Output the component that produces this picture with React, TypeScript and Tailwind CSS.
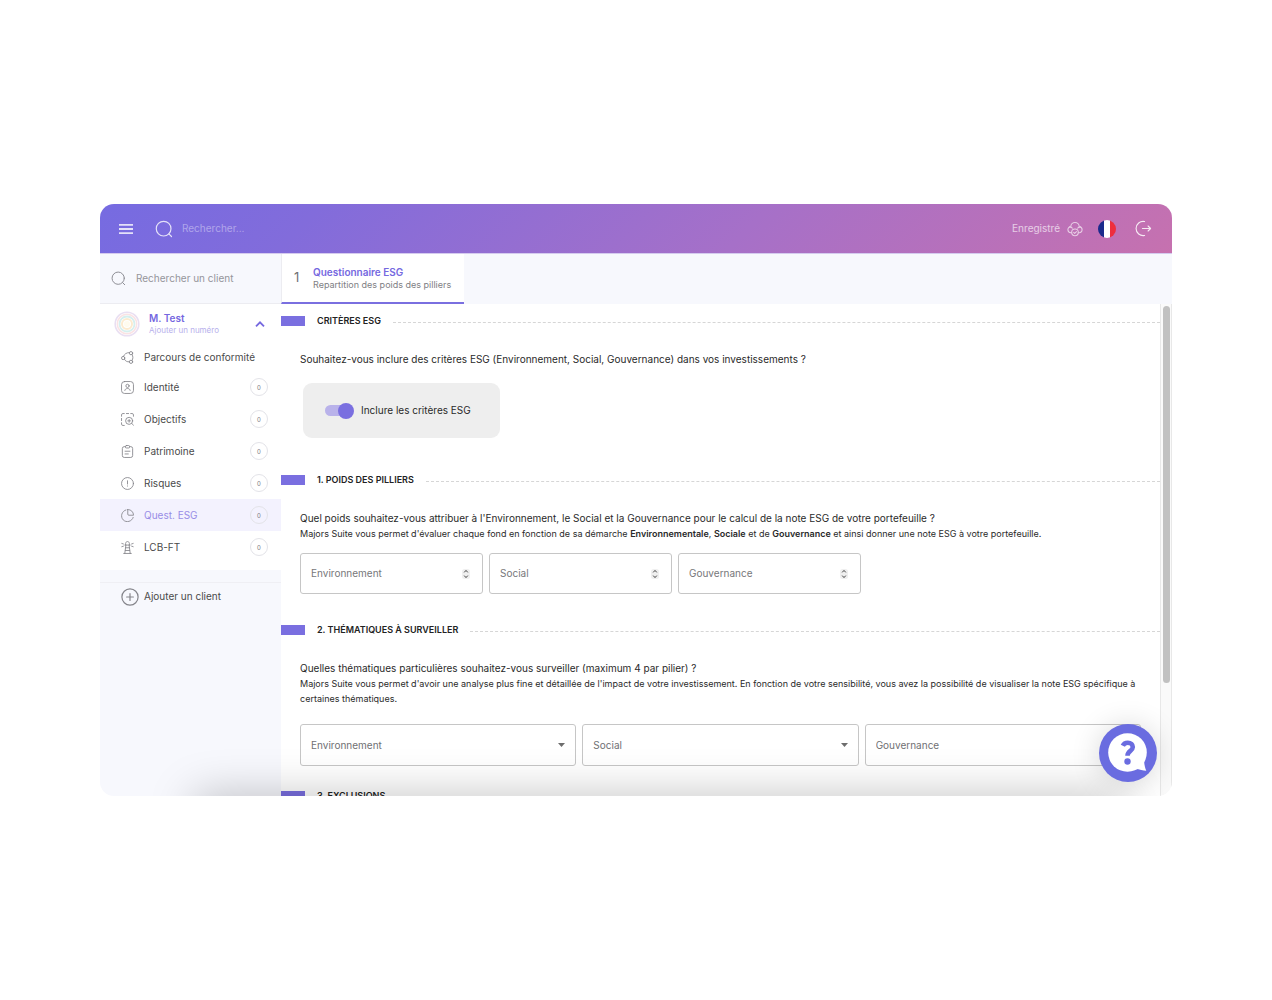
import React from "react";

interface IconProps {
  className?: string;
  children?: React.ReactNode;
}

function Icon({ className, children }: IconProps) {
  return (
    <svg
      className={className}
      viewBox="0 0 24 24"
      fill="none"
      stroke="currentColor"
      strokeWidth={1.6}
      strokeLinecap="round"
      strokeLinejoin="round"
      aria-hidden="true"
    >
      {children}
    </svg>
  );
}

const searchIcon = (
  <>
    <circle cx="11.5" cy="11.5" r="9.8" />
    <path d="M18.5 18.5 22 22" />
  </>
);

const menu = [
  {
    label: "Identité",
    count: 0,
    icon: (
      <>
        <rect x="1" y="1" width="22" height="22" rx="5.5" />
        <circle cx="12" cy="9" r="3" />
        <path d="M7 17.5c.4-2.4 2.500-3.700 5-3.700s4.600 1.300 5 3.700" />
      </>
    ),
  },
  {
    label: "Objectifs",
    count: 0,
    icon: (
      <>
        <path d="M1 6V3.500A2.500 2.500 0 0 1 3.500 1H6M10 1h4M18 1h2.500A2.500 2.500 0 0 1 23 3.500V6M1 10v4M1 18v2.500A2.500 2.500 0 0 0 3.500 23H6" />
        <circle cx="15" cy="14.500" r="6.500" />
        <path d="m20 19.500 3 3M15 12v5M12.500 14.500h5" />
      </>
    ),
  },
  {
    label: "Patrimoine",
    count: 0,
    icon: (
      <>
        <path d="M8 3H6A3.500 3.500 0 0 0 2.500 6.500v13A3.500 3.500 0 0 0 6 23h12a3.500 3.500 0 0 0 3.500-3.500v-13A3.500 3.500 0 0 0 18 3h-2" />
        <rect x="8" y="1" width="8" height="4.500" rx="2" />
        <path d="M7.500 11.500h9M7.500 16.500h6" />
      </>
    ),
  },
  {
    label: "Risques",
    count: 0,
    icon: (
      <>
        <circle cx="12" cy="12" r="11" />
        <path d="M12 7v6M12 16.500v.3" />
      </>
    ),
  },
  {
    label: "Quest. ESG",
    count: 0,
    active: true,
    icon: (
      <>
        <path d="M9 1.800A11 11 0 1 0 22.500 15.500" />
        <path d="M12.500 1v8.500a2 2 0 0 0 2 2H23C23 5.500 18.500 1 12.500 1Z" />
      </>
    ),
  },
  {
    label: "LCB-FT",
    count: 0,
    icon: (
      <>
        <path d="M8.500 7.500V4.500C8.500 2.800 10 1 12 1s3.500 1.800 3.500 3.500v3M7 7.500h10M9 7.500 7 23M15 7.500 17 23M5 23h14M8.500 12.500h7M8 17.500h8" />
        <path d="M1.500 4.500 4.500 5.500M1.500 10.500l3-1M22.500 4.500 19.500 5.500M22.500 10.500l-3-1" />
      </>
    ),
  },
];

function TopBar() {
  return (
    <header className="flex h-[50px] shrink-0 items-center border-b border-[#d5cbef] bg-[linear-gradient(135deg,#766be1_0%,#826cdb_20%,#a670c8_60%,#c671af_100%)] pr-5 pl-[18px] text-white">
      <button type="button" aria-label="Menu" className="flex size-4 items-center justify-center opacity-80">
        <svg className="w-[14px]" viewBox="0 0 14 10" fill="currentColor" aria-hidden="true">
          <path d="M0 0h14v1.800H0zM0 4.100h14v1.800H0zM0 8.200h14V10H0z" />
        </svg>
      </button>
      <label className="ml-[21px] flex flex-1 items-center">
        <Icon className="size-[18px] opacity-80">{searchIcon}</Icon>
        <input
          type="search"
          aria-label="Rechercher"
          placeholder="Rechercher..."
          className="ml-[9px] w-48 bg-transparent text-[10px] outline-none placeholder:text-white/40"
        />
      </label>
      <span className="text-[10px] text-white/65">Enregistré</span>
      <Icon className="ml-[7px] size-4 opacity-65">
        <path d="M7 17.500H6a4.500 4.500 0 0 1-.3-9 6.300 6.300 0 0 1 12.600 0A4.500 4.500 0 0 1 18 17.500h-1" />
        <path d="M3.500 8.800c2 0 3.500.8 4.500 2M20.500 8.800c-2 0-3.500.8-4.500 2" />
        <circle cx="12" cy="17" r="5" />
        <path d="m10 17 1.500 1.500 2.700-2.700" />
      </Icon>
      <button type="button" aria-label="Français" className="ml-[15px] flex size-[18px] overflow-hidden rounded-full">
        <span className="h-full flex-1 bg-[#1b2a8c]" />
        <span className="h-full flex-1 bg-white" />
        <span className="h-full flex-1 bg-[#ee2e3d]" />
      </button>
      <button type="button" aria-label="Déconnexion" className="ml-[19px] opacity-85">
        <Icon className="size-[17px]">
          <path d="M13.500 2.200A10 10 0 1 0 13.500 21.800M10.500 12H22M18.500 8.500 22 12l-3.500 3.500" />
        </Icon>
      </button>
    </header>
  );
}

function Sidebar() {
  return (
    <aside className="flex w-[181px] shrink-0 flex-col bg-[#f7f8fd] text-[#4a4a4a]">
      <label className="flex h-[50px] shrink-0 items-center border-b border-[#ececf1] pl-[11px]">
        <Icon className="size-[15px] shrink-0 text-[#8f8f96]">{searchIcon}</Icon>
        <input
          type="search"
          aria-label="Rechercher un client"
          placeholder="Rechercher un client"
          className="ml-[10px] w-full min-w-0 bg-transparent text-[10px] outline-none placeholder:text-[#95959b]"
        />
      </label>
      <div className="bg-white pb-[7px]">
        <div className="flex h-10 items-center pr-4 pl-[14px]">
          <svg className="size-[26px]" viewBox="0 0 26 26" fill="none" aria-hidden="true">
            <circle cx="13" cy="13" r="11.800" stroke="#e9dff2" strokeWidth="1.600" />
            <circle cx="13" cy="13" r="9.700" stroke="#fae3e4" strokeWidth="1.500" />
            <circle cx="13" cy="13" r="7.500" stroke="#d6efee" strokeWidth="1.800" />
            <circle cx="13" cy="13" r="5" stroke="#fcebd0" strokeWidth="2" />
            <circle cx="13" cy="13" r="3" fill="#fffbee" />
          </svg>
          <div className="ml-[9px] flex-1">
            <p className="text-[10px] leading-[13px] font-semibold text-[#7568df]">M. Test</p>
            <a href="#numero" className="block text-[8px] leading-[11px] text-[#b7b0ec]">
              Ajouter un numéro
            </a>
          </div>
          <button type="button" aria-label="Replier" className="text-[#7568df]">
            <svg className="w-[10px]" viewBox="0 0 10 6" fill="none" stroke="currentColor" strokeWidth="1.800" aria-hidden="true">
              <path d="m1 5.300 4-4 4 4" />
            </svg>
          </button>
        </div>
        <nav>
          <a href="#parcours" className="flex h-[27px] items-center pl-[21px] text-[10px]">
            <Icon className="mr-[10px] size-[13px] text-[#85858b]">
              <circle cx="4" cy="13" r="3" />
              <circle cx="18.500" cy="4" r="3" />
              <circle cx="18.500" cy="20" r="3" />
              <path d="M4.500 10c1.500-4 5.500-7.500 11-7M6.500 15.500c1.500 3 4.500 5 9 4.500M20.500 6.500c2 3.500 2 7.500 0 11" />
            </Icon>
            Parcours de conformité
          </a>
          {menu.map((item) => (
            <a
              key={item.label}
              href={"#" + item.label}
              className={
                item.active
                  ? "flex h-8 items-center bg-[#f3f2fe] pr-[13px] pl-[21px] text-[10px] text-[#988de6]"
                  : "flex h-8 items-center pr-[13px] pl-[21px] text-[10px]"
              }
            >
              <Icon className="mr-[10px] size-[13px] text-[#85858b]">{item.icon}</Icon>
              <span className="flex-1">{item.label}</span>
              <span className="flex size-[18px] items-center justify-center rounded-full border border-[#e3e3e8] text-[6px] text-[#77777c]">
                {item.count}
              </span>
            </a>
          ))}
        </nav>
      </div>
      <button
        type="button"
        className="mt-3 flex h-7 items-center border-t border-[#efeff4] pl-[21px] text-[10px]"
      >
        <Icon className="mr-[5px] size-[18px] text-[#85858b]">
          <circle cx="12" cy="12" r="10.800" />
          <path d="M12 7.500v9M7.500 12h9" />
        </Icon>
        Ajouter un client
      </button>
    </aside>
  );
}

function SectionTitle({ children }: { children: React.ReactNode }) {
  return (
    <div className="flex h-3 items-center">
      <span className="h-[10px] w-6 bg-[#7a6fe0]" />
      <h2 className="ml-3 text-[9px] font-semibold text-[#222]">{children}</h2>
      <span className="mt-[2px] ml-3 flex-1 border-t border-dashed border-[#d6d6d6]" />
    </div>
  );
}

function NumberField({ label }: { label: string }) {
  return (
    <div className="flex h-[41px] items-center rounded-[3px] border border-[#c6c6c6] pr-3 pl-[10px]">
      <input
        type="number"
        aria-label={label}
        placeholder={label}
        className="w-full min-w-0 [appearance:textfield] bg-transparent text-[10px] outline-none placeholder:text-[#77777a]"
      />
      <svg className="h-[10px] w-2 shrink-0" viewBox="0 0 8 10" fill="none" aria-hidden="true">
        <rect width="8" height="10" rx="2.500" fill="#efefef" />
        <path d="M2.200 3.400 4 1.400l1.800 2M2.200 6.600 4 8.600l1.800-2" stroke="#444" strokeWidth="1" />
      </svg>
    </div>
  );
}

function SelectField({ label }: { label: string }) {
  return (
    <div className="flex h-[42px] items-center rounded-[3px] border border-[#c6c6c6] pr-[10px] pl-[10px]">
      <select
        aria-label={label}
        className="w-full min-w-0 appearance-none bg-transparent text-[10px] text-[#707073] outline-none"
      >
        <option>{label}</option>
      </select>
      <svg className="w-[7px] shrink-0" viewBox="0 0 7 4" fill="#6d6d6d" aria-hidden="true">
        <path d="M0 0h7L3.500 4z" />
      </svg>
    </div>
  );
}

function Questionnaire() {
  return (
    <main className="min-h-0 flex-1 overflow-hidden pt-[11px] text-[#2a2a2a]">
      <section>
        <SectionTitle>CRITÈRES ESG</SectionTitle>
        <div className="px-[19px] pt-6 pb-9">
          <p className="text-[10px] leading-4">
            Souhaitez-vous inclure des critères ESG (Environnement, Social, Gouvernance) dans vos investissements ?
          </p>
          <label className="mt-4 ml-[3px] inline-flex h-[55px] items-center rounded-[9px] bg-[#eee] pr-[29px] pl-[22px] text-[10px]">
            <span className="relative flex h-4 w-[29px] items-center">
              <input
                type="checkbox"
                role="switch"
                defaultChecked
                className="peer h-[11px] w-[27px] appearance-none rounded-full bg-[#b9b2ea]"
              />
              <span className="pointer-events-none absolute left-0 size-4 rounded-full bg-white peer-checked:right-0 peer-checked:left-auto peer-checked:bg-[#7a6fe0]" />
            </span>
            <span className="ml-[7px]">Inclure les critères ESG</span>
          </label>
        </div>
      </section>
      <section>
        <SectionTitle>1. POIDS DES PILLIERS</SectionTitle>
        <div className="px-[19px] pt-6 pb-[30px]">
          <p className="text-[10px] leading-4">
            Quel poids souhaitez-vous attribuer à l'Environnement, le Social et la Gouvernance pour le calcul de la note
            ESG de votre portefeuille ?
          </p>
          <p className="text-[9px] leading-[15px]">
            Majors Suite vous permet d'évaluer chaque fond en fonction de sa démarche{" "}
            <b className="font-semibold">Environnementale</b>, <b className="font-semibold">Sociale</b> et de{" "}
            <b className="font-semibold">Gouvernance</b> et ainsi donner une note ESG à votre portefeuille.
          </p>
          <div className="mt-3 grid max-w-[561px] grid-cols-3 gap-[6px]">
            <NumberField label="Environnement" />
            <NumberField label="Social" />
            <NumberField label="Gouvernance" />
          </div>
        </div>
      </section>
      <section>
        <SectionTitle>2. THÉMATIQUES À SURVEILLER</SectionTitle>
        <div className="px-[19px] pt-6 pb-6">
          <p className="text-[10px] leading-4">
            Quelles thématiques particulières souhaitez-vous surveiller (maximum 4 par pilier) ?
          </p>
          <p className="text-[9px] leading-[15px]">
            Majors Suite vous permet d'avoir une analyse plus fine et détaillée de l'impact de votre investissement. En
            fonction de votre sensibilité, vous avez la possibilité de visualiser la note ESG spécifique à certaines
            thématiques.
          </p>
          <div className="mt-[18px] grid grid-cols-3 gap-[6px]">
            <SelectField label="Environnement" />
            <SelectField label="Social" />
            <SelectField label="Gouvernance" />
          </div>
        </div>
      </section>
      <section>
        <SectionTitle>3. EXCLUSIONS</SectionTitle>
      </section>
    </main>
  );
}

export default function App() {
  return (
    <div className="h-screen bg-white px-[100px] py-[204px] font-['Inter',sans-serif]">
      <div className="relative flex h-full flex-col overflow-hidden rounded-[14px] bg-white">
        <TopBar />
        <div className="flex min-h-0 flex-1">
          <Sidebar />
          <div className="flex min-w-0 flex-1 flex-col">
            <div className="flex h-[50px] shrink-0 bg-[#f7f8fd]">
              <button
                type="button"
                className="flex w-[183px] items-center border-b-2 border-l border-b-[#7a6fe0] border-l-[#ececf1] bg-white pl-3 text-left"
              >
                <span className="w-[19px] text-[13px] text-[#707073]">1</span>
                <span className="whitespace-nowrap">
                  <span className="block text-[10px] leading-[13px] font-semibold text-[#7568df]">
                    Questionnaire ESG
                  </span>
                  <span className="block text-[9px] leading-3 text-[#808084]">Repartition des poids des pilliers</span>
                </span>
              </button>
            </div>
            <div className="flex min-h-0 flex-1">
              <Questionnaire />
              <div className="w-3 shrink-0 border-x border-[#e8e8e8] bg-[#fafafa] px-[2px] pt-[2px]">
                <div className="h-[77%] w-[7px] rounded-full bg-[#c1c1c1]" />
              </div>
            </div>
          </div>
        </div>
        <div className="pointer-events-none absolute -bottom-10 right-[50px] left-[95px] h-10 shadow-[0_0_45px_rgba(0,0,0,0.25)]" />
        <button
          type="button"
          aria-label="Aide"
          className="absolute right-[15px] bottom-[14px] flex size-[58px] items-center justify-center rounded-full bg-[#6a6ce0] shadow-[0_2px_30px_rgba(0,0,0,0.16)]"
        >
          <svg className="size-10" viewBox="0 0 40 40" fill="none" aria-hidden="true">
            <circle cx="19.500" cy="19.500" r="19.300" fill="#fff" />
            <path d="M36 27c.2 4 .8 7.500 2.300 10.700-3-.3-7-1-10.800-2.200Z" fill="#fff" />
            <path
              d="M14.800 12.800c1-2.200 2.700-3 5-3 3.200 0 5 1.700 5 4.200 0 4-5.300 3.800-5.300 8.700"
              stroke="#6a6ce0"
              strokeWidth="4.600"
              strokeLinejoin="round"
            />
            <circle cx="19.500" cy="28.500" r="3.200" fill="#6a6ce0" />
          </svg>
        </button>
      </div>
    </div>
  );
}
